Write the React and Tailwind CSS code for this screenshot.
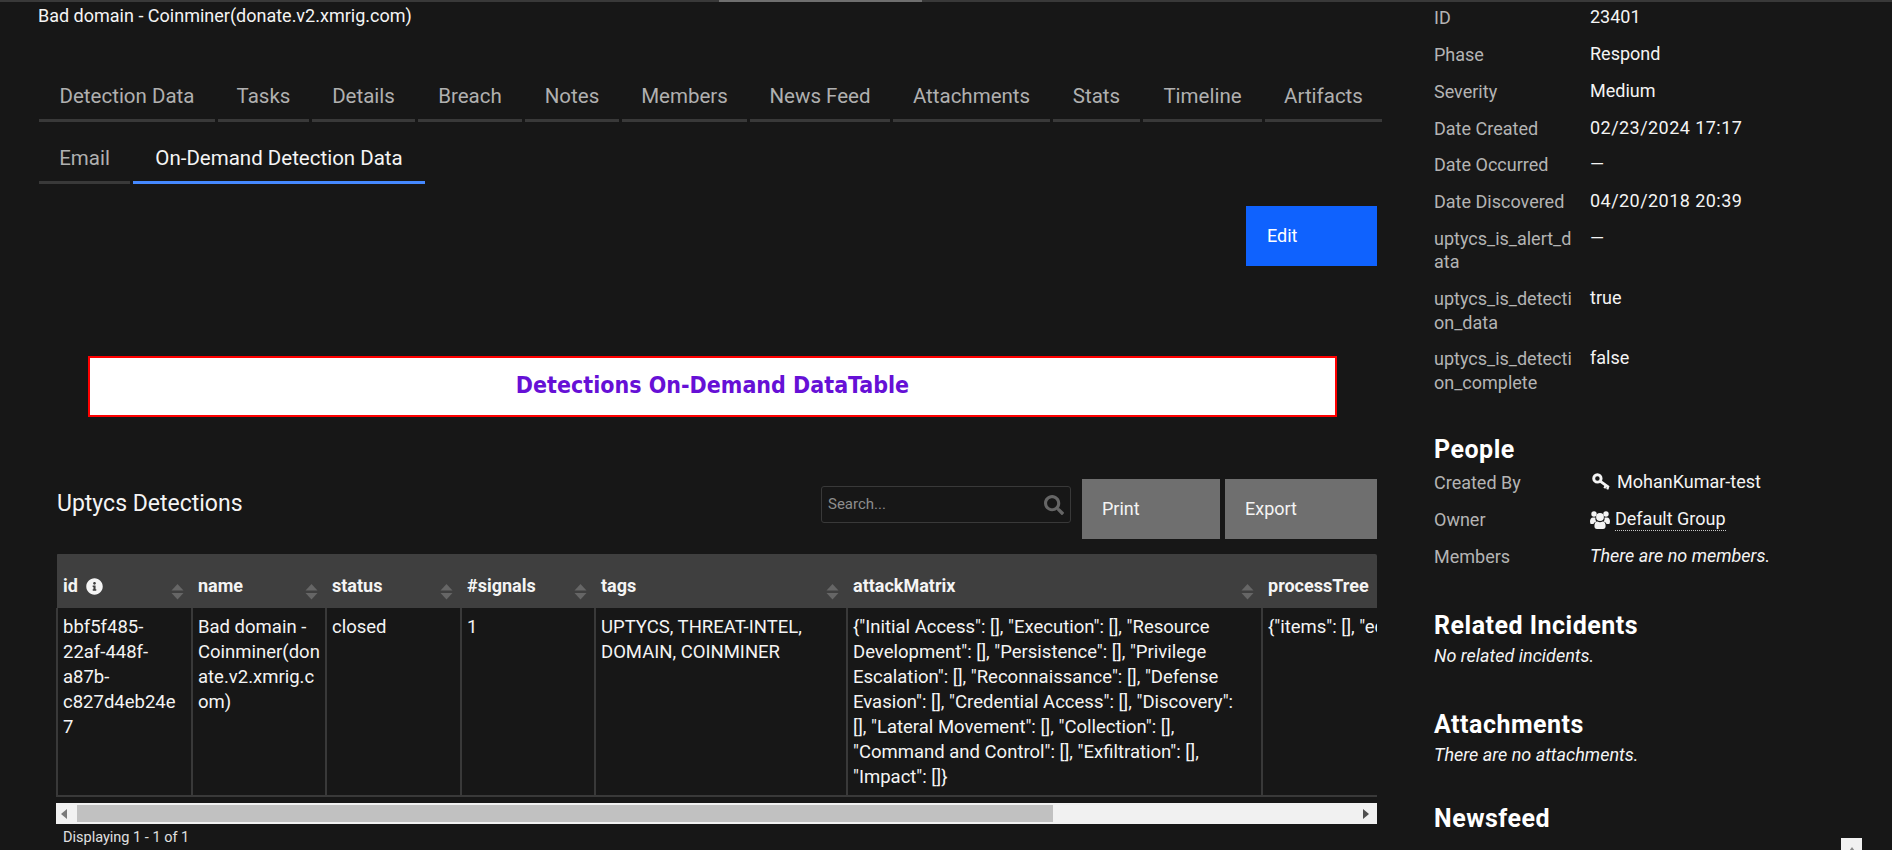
import { FaInfoCircle, FaSearch } from 'react-icons/fa'

const mainTabs = [
  ['Detection Data', 'w-[176px]'],
  ['Tasks', 'w-[91px]'],
  ['Details', 'w-[103px]'],
  ['Breach', 'w-[104px]'],
  ['Notes', 'w-[94px]'],
  ['Members', 'w-[125px]'],
  ['News Feed', 'w-[140px]'],
  ['Attachments', 'w-[157px]'],
  ['Stats', 'w-[87px]'],
  ['Timeline', 'w-[119px]'],
  ['Artifacts', 'w-[117px]'],
]

const columns = [
  ['name', 'w-[134px]'],
  ['status', 'w-[135px]'],
  ['#signals', 'w-[134px]'],
  ['tags', 'w-[252px]'],
  ['attackMatrix', 'w-[415px]'],
]

const details = [
  ['ID', '23401'],
  ['Phase', 'Respond'],
  ['Severity', 'Medium'],
  ['Date Created', <span className="tracking-[0.45px]">02/23/2024 17:17</span>],
  ['Date Occurred', '—'],
  ['Date Discovered', <span className="tracking-[0.45px]">04/20/2018 20:39</span>],
  ['uptycs_is_alert_d\nata', '—'],
  ['uptycs_is_detecti\non_data', 'true'],
  ['uptycs_is_detecti\non_complete', 'false'],
]

const attackMatrix = `{"Initial Access": [], "Execution": [], "Resource
Development": [], "Persistence": [], "Privilege
Escalation": [], "Reconnaissance": [], "Defense
Evasion": [], "Credential Access": [], "Discovery":
[], "Lateral Movement": [], "Collection": [],
"Command and Control": [], "Exfiltration": [],
"Impact": []}`

function Tab({ label, width, active }) {
  return (
    <div
      className={`${width} h-[50px] shrink-0 border-b-[3px] text-center text-[20.5px] leading-[49px] ${
        active ? 'border-[#4589ff] text-[#f4f4f4]' : 'border-[#393939] text-[#b0b0b0]'
      }`}
    >
      {label}
    </div>
  )
}

function SortIcon() {
  return (
    <svg viewBox="0 0 12 16" className="absolute right-[8px] bottom-[8px] h-[16px] w-[13px] fill-[#666666]">
      <path d="M6 0 L12 6.5 H0 Z" />
      <path d="M0 9 H12 L6 15.5 Z" />
    </svg>
  )
}

function KeyIcon() {
  return (
    <svg viewBox="0 0 18 18" className="ml-[2px] h-[18px] w-[18px] shrink-0 fill-none stroke-[#f4f4f4]">
      <circle cx="5.4" cy="5.4" r="3.7" strokeWidth="2.9" />
      <path d="M8.4 8.4 L16.8 14.4" strokeWidth="2.8" />
      <path d="M13.8 12.4 L12.4 15.2 M16.2 14 L15.2 16.4" strokeWidth="2.2" />
    </svg>
  )
}

function GroupIcon() {
  return (
    <svg viewBox="0 0 20 18" className="h-[18px] w-[20px] shrink-0 fill-[#f4f4f4]">
      <circle cx="4" cy="3" r="2.7" />
      <circle cx="16" cy="3" r="2.7" />
      <circle cx="10" cy="6" r="3.9" />
      <path d="M0 11 Q0 6.5 3 6.5 L5.4 6.5 Q5 9 6.4 10.4 Q4 11 3.4 13 L0.6 13 Z" />
      <path d="M20 11 Q20 6.5 17 6.5 L14.6 6.5 Q15 9 13.6 10.4 Q16 11 16.6 13 L19.4 13 Z" />
      <path d="M4.4 15 Q4.4 10.6 7.4 10.4 Q10 12 12.6 10.4 Q15.6 10.6 15.6 15 Q15.6 18 13 18 L7 18 Q4.4 18 4.4 15 Z" />
    </svg>
  )
}

function Row({ label, children }) {
  return (
    <div className="mb-[13.4px] flex">
      <div className="w-[141px] shrink-0 whitespace-pre-line text-[18px] leading-[23.4px] text-[#b4b4b4]">{label}</div>
      <div className="ml-[15px] whitespace-nowrap text-[18px] leading-[21.4px] text-[#f4f4f4]">{children}</div>
    </div>
  )
}

function Heading({ className, children }) {
  return <h2 className={`${className} text-[25px] font-bold leading-[28px] tracking-[0.5px] text-white`}>{children}</h2>
}

export default function App() {
  return (
    <div className="relative h-[850px] w-[1892px] overflow-hidden bg-[#171717] font-['Roboto','Noto_Sans',sans-serif] text-[#f4f4f4]">
      <div className="h-[2px] bg-[#393939]">
        <div className="ml-[719px] h-[2px] w-[203px] bg-[#6f6f6f]" />
      </div>

      <div className="flex">
        <div className="w-[1392px] shrink-0 pl-[39px] pr-[15px]">
          <div className="-ml-px mt-[2px] text-[18px] leading-[24px] text-[#f4f4f4]">Bad domain - Coinminer(donate.v2.xmrig.com)</div>

          <div className="mt-[44px] flex gap-[3px]">
            {mainTabs.map(([label, width]) => (
              <Tab key={label} label={label} width={width} />
            ))}
          </div>
          <div className="mt-[12px] flex gap-[3px]">
            <Tab label="Email" width="w-[91px]" />
            <Tab label="On-Demand Detection Data" width="w-[292px]" active />
          </div>

          <div className="mt-[22px] flex justify-end">
            <button className="h-[60px] w-[131px] bg-[#0f62fe] pb-[2px] pl-[21px] text-left text-[18px] text-white">Edit</button>
          </div>

          <div className="ml-[49px] mt-[90px] flex h-[61px] w-[1249px] items-center justify-center border-2 border-[#ff0000] bg-white pb-[3px] font-['DejaVu_Sans_Condensed','DejaVu_Sans',sans-serif] text-[23px] font-bold text-[#6610d6]">
            Detections On-Demand DataTable
          </div>

          <div className="mt-[62px] flex items-start">
            <div className="ml-[18px] flex-1 text-[23px] leading-[50px] text-[#f4f4f4]">Uptycs Detections</div>
            <div className="mr-[11px] mt-[7px] flex h-[37px] w-[250px] items-center rounded-[3px] border border-[#393939] pl-[6px] pr-[6px]">
              <input
                placeholder="Search..."
                className="min-w-0 flex-1 bg-transparent text-[15px] outline-none placeholder:text-[#8d8d8d]"
              />
              <FaSearch className="text-[20px] text-[#666666]" />
            </div>
            <button className="h-[60px] w-[138px] bg-[#6f6f6f] pb-[2px] pl-[20px] text-left text-[18px] text-[#f4f4f4]">Print</button>
            <button className="ml-[5px] h-[60px] w-[152px] bg-[#6f6f6f] pb-[2px] pl-[20px] text-left text-[18px] text-[#f4f4f4]">Export</button>
          </div>

          <div className="ml-[17px] mt-[15px] overflow-hidden rounded-t-[2px]">
            <table className="w-[1800px] table-fixed border-collapse text-left text-[18.5px]">
              <thead>
                <tr className="h-[54px] bg-[#3f3f3f] text-[18px]">
                  <th className="relative w-[135px] px-[6px] pb-[11px] align-bottom font-bold leading-[22px]">
                    <span className="flex items-center gap-[8px]">
                      id <FaInfoCircle className="text-[17px] text-[#f4f4f4]" />
                    </span>
                    <SortIcon />
                  </th>
                  {columns.map(([label, width]) => (
                    <th key={label} className={`relative ${width} px-[6px] pb-[11px] align-bottom font-bold leading-[22px]`}>
                      {label}
                      <SortIcon />
                    </th>
                  ))}
                  <th className="px-[6px] pb-[11px] align-bottom font-bold leading-[22px]">processTree</th>
                </tr>
              </thead>
              <tbody className="leading-[25px] text-[#f4f4f4]">
                <tr className="h-[188px] border-b-2 border-[#393939] align-top">
                  <td className="border-x-2 border-[#393939] px-[5px] pt-[7px]">
                    bbf5f485-
                    <br />
                    22af-448f-
                    <br />
                    a87b-
                    <br />
                    c827d4eb24e
                    <br />7
                  </td>
                  <td className="border-x-2 border-[#393939] px-[5px] pt-[7px]">
                    Bad domain -
                    <br />
                    Coinminer(don
                    <br />
                    ate.v2.xmrig.c
                    <br />
                    om)
                  </td>
                  <td className="border-x-2 border-[#393939] px-[5px] pt-[7px]">closed</td>
                  <td className="border-x-2 border-[#393939] px-[5px] pt-[7px]">1</td>
                  <td className="border-x-2 border-[#393939] px-[5px] pt-[7px]">UPTYCS, THREAT-INTEL, DOMAIN, COINMINER</td>
                  <td className="whitespace-pre-line border-x-2 border-[#393939] px-[5px] pt-[7px]">{attackMatrix}</td>
                  <td className="whitespace-nowrap border-x-2 border-[#393939] px-[5px] pt-[7px]">{'{"items": [], "edges": []}'}</td>
                </tr>
              </tbody>
            </table>
          </div>

          <div className="ml-[17px] mt-[6px] flex h-[21px] items-center bg-[#f1f1f1]">
            <svg viewBox="0 0 6 10" className="ml-[5px] h-[10px] w-[6px] fill-[#7a7a7a]">
              <path d="M6 0 V10 L0 5 Z" />
            </svg>
            <div className="ml-[10px] h-[17px] w-[976px] bg-[#c1c1c1]" />
            <svg viewBox="0 0 6 10" className="ml-auto mr-[8px] h-[10px] w-[6px] fill-[#505050]">
              <path d="M0 0 V10 L6 5 Z" />
            </svg>
          </div>

          <div className="ml-[24px] mt-[5px] text-[14.5px] leading-[18px] text-[#e0e0e0]">Displaying 1 - 1 of 1</div>
        </div>

        <div className="flex w-[458px] shrink-0 flex-col pl-[42px] pt-[4.3px]">
          {details.map(([label, value]) => (
            <Row key={label} label={label}>
              {value}
            </Row>
          ))}

          <Heading className="mb-[7.3px] mt-[28.3px]">People</Heading>
          <Row label="Created By">
            <span className="flex items-center gap-[7px]">
              <KeyIcon /> MohanKumar-test
            </span>
          </Row>
          <Row label="Owner">
            <span className="flex items-center gap-[5px]">
              <GroupIcon />
              <span className="border-b border-dotted border-[#c6c6c6] leading-[22px]">Default Group</span>
            </span>
          </Row>
          <Row label="Members">
            <i>There are no members.</i>
          </Row>

          <Heading className="mt-[30.3px]">Related Incidents</Heading>
          <div className="mt-[4.3px] text-[18px] italic leading-[23.4px]">No related incidents.</div>

          <Heading className="mt-[43.3px]">Attachments</Heading>
          <div className="mt-[4.3px] text-[18px] italic leading-[23.4px]">There are no attachments.</div>

          <Heading className="mt-[38.3px]">Newsfeed</Heading>
        </div>
      </div>

      <div className="absolute bottom-0 right-[30px] flex h-[12px] w-[21px] justify-center overflow-hidden bg-[#f1f1f1] pt-[9px]">
        <svg viewBox="0 0 10 7" className="h-[7px] w-[10px] shrink-0 fill-[#8a8a8a]">
          <path d="M5 0 L10 7 H0 Z" />
        </svg>
      </div>
    </div>
  )
}
